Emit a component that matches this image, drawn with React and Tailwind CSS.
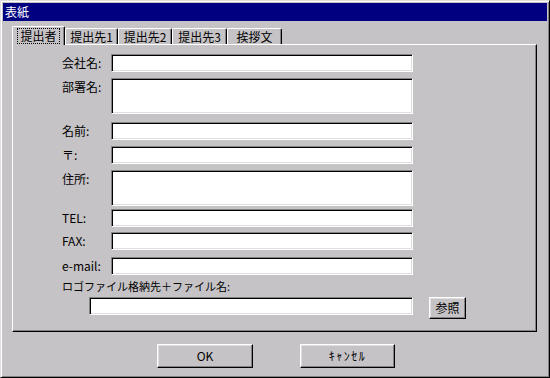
import React from "react";

const font = { fontFamily: '"Noto Sans CJK JP", "Noto Sans", sans-serif' };

const sunken =
  "bg-white border-t border-l border-[#848284] border-r border-b border-r-white border-b-white shadow-[inset_1px_1px_0_#000,inset_-1px_-1px_0_#dfdfdf]";

const raised =
  "bg-[#c6c3c6] border-t border-l border-white border-r border-b border-r-black border-b-black shadow-[inset_-1px_-1px_0_#848284,inset_1px_1px_0_#dfdfdf]";

// 提出者タブの項目
const fields = [
  { label: "会社名:", h: "h-[18px]", mt: "mt-0" },
  { label: "部署名:", h: "h-[36px]", mt: "mt-[6px]" },
  { label: "名前:", h: "h-[18px]", mt: "mt-[8px]" },
  { label: "〒:", h: "h-[18px]", mt: "mt-[6px]" },
  { label: "住所:", h: "h-[36px]", mt: "mt-[6px]" },
  { label: "TEL:", h: "h-[18px]", mt: "mt-[3px]" },
  { label: "FAX:", h: "h-[18px]", mt: "mt-[5px]" },
  { label: "e-mail:", h: "h-[18px]", mt: "mt-[7px]" },
];

const tabs = [
  { name: "提出者", w: "w-[53px]" },
  { name: "提出先1", w: "w-[53px]" },
  { name: "提出先2", w: "w-[54px]" },
  { name: "提出先3", w: "w-[55px]" },
  { name: "挨拶文", w: "w-[55px]" },
];

function Tabs() {
  return (
    <div className="ml-[9px] mt-[5px] flex h-[18px] items-end">
      {tabs.map((t, i) =>
        i === 0 ? (
          <div
            key={t.name}
            className={`relative z-10 ${t.w} h-[19px] self-start bg-[#c6c3c6] border-t border-l border-white border-r border-r-black rounded-t-[2px] shadow-[inset_-1px_0_0_#848284] flex items-center justify-center`}
          >
            <span className="outline outline-1 outline-dotted outline-black px-[2px] text-[12px] leading-[14px] text-black">
              {t.name}
            </span>
          </div>
        ) : (
          <div
            key={t.name}
            className={`${t.w} h-[16px] bg-[#c6c3c6] border-t border-l border-white border-r border-r-black rounded-t-[2px] shadow-[inset_-1px_0_0_#848284] flex items-center justify-center text-[12px] leading-[14px] text-black`}
          >
            {t.name}
          </div>
        )
      )}
    </div>
  );
}

export default function App() {
  return (
    <div
      className="w-[550px] h-[378px] bg-[#c6c3c6] border-t border-l border-[#dfdfdf] border-r border-b border-r-black border-b-black shadow-[inset_1px_1px_0_#fff,inset_-1px_-1px_0_#848284] p-[2px]"
      style={font}
    >
      {/* タイトルバー */}
      <div className="h-[18px] bg-[#000080] text-white text-[12px] leading-[18px] pl-[2px]">
        表紙
      </div>

      <Tabs />

      {/* タブパネル */}
      <div className="ml-[9px] w-[525px] h-[288px] border-t border-l border-white border-r border-b border-r-black border-b-black shadow-[inset_-1px_-1px_0_#848284] pt-[9px]">
        {fields.map((f) => (
          <div key={f.label} className={`flex items-start pl-[49px] ${f.mt}`}>
            <div className="w-[49px] pt-[2px] text-[12px] leading-[14px] text-black">
              {f.label}
            </div>
            <div className={`w-[302px] ${f.h} ${sunken}`} />
          </div>
        ))}

        <div className="pl-[49px] mt-[3px] text-[11px] leading-[16px] text-black">
          ロゴファイル格納先＋ファイル名:
        </div>

        <div className="flex items-start pl-[76px] mt-[3px]">
          <div className={`w-[324px] h-[18px] ${sunken}`} />
          <button
            className={`ml-[16px] w-[37px] h-[22px] ${raised} text-[12px] leading-[20px] text-black`}
          >
            参照
          </button>
        </div>
      </div>

      {/* ボタン */}
      <div className="flex mt-[12px]">
        <button
          className={`ml-[154px] w-[96px] h-[24px] ${raised} text-[12px] leading-[22px] text-black`}
        >
          OK
        </button>
        <button
          className={`ml-[47px] w-[95px] h-[24px] ${raised} text-[12px] leading-[22px] tracking-[1.5px] text-black`}
        >
          ｷｬﾝｾﾙ
        </button>
      </div>
    </div>
  );
}
